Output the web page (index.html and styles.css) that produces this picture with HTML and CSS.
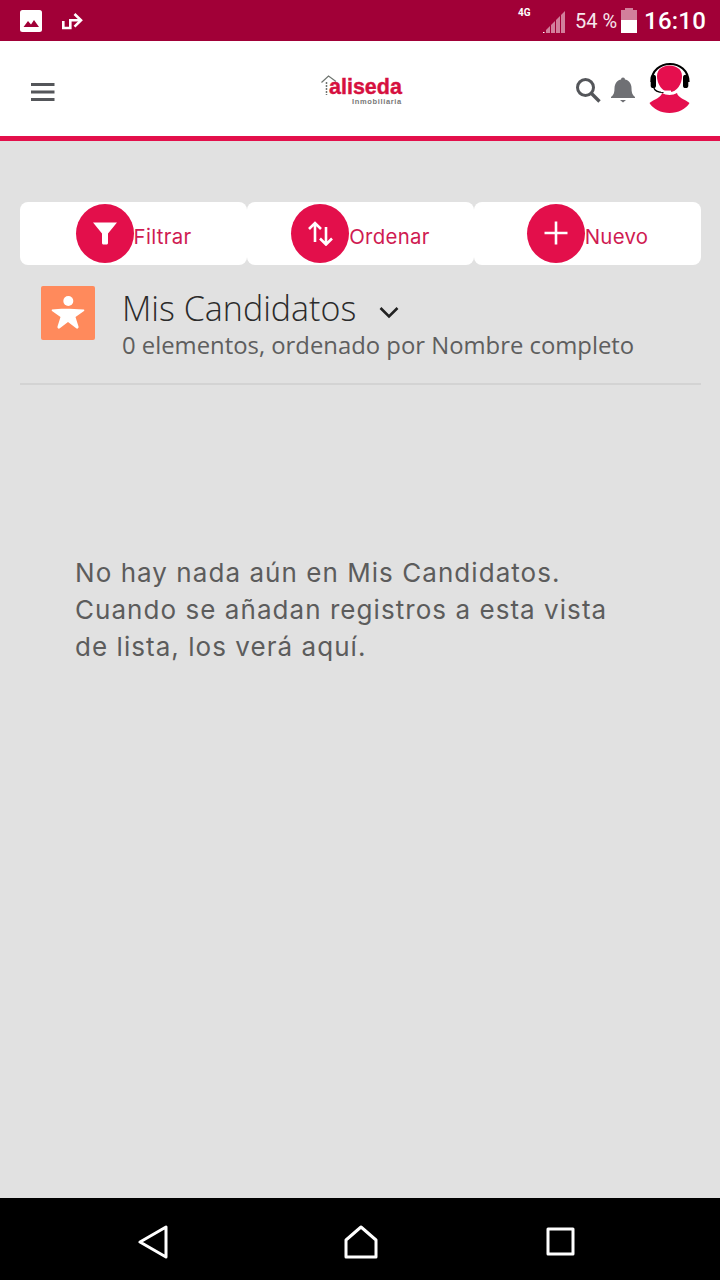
FILE: index.html
```html
<!DOCTYPE html>
<html lang="es">
<head>
<meta charset="utf-8">
<title>Mis Candidatos</title>
<link rel="stylesheet" href="styles.css">
</head>
<body>
<div class="phone">
  <div class="status">
    <div class="status-left">
      <svg class="ic-photo" viewBox="0 0 22 22"><rect width="22" height="22" rx="2.500" fill="#fff"/><path d="M3.500 17 8 11l3 3.500 3-4.500 5 7z" fill="#a10037"/></svg>
      <svg class="ic-share" viewBox="0 0 22 18"><path d="M2.300 9v7h7V8.300h10" fill="none" stroke="#fff" stroke-width="2.600"/><path d="M13.500 2l6.500 6.300-6.500 6.300" fill="none" stroke="#fff" stroke-width="2.600"/></svg>
    </div>
    <div class="status-right">
      <span class="net">4G</span>
      <svg class="ic-signal" viewBox="0 0 22 22"><path d="M0 21h1.500v1H0z" fill="#fff"/><path d="M3 22v-3l4-4v7zM8 22v-8l4-4v12zM13 22V9l4-4v17zM18 22V4l4-4v22z" fill="#d27f9b"/></svg>
      <span class="pct">54 %</span>
      <div class="battery"><div class="battery-cap"></div><div class="battery-empty"></div><div class="battery-full"></div></div>
      <span class="clock">16:10</span>
    </div>
  </div>

  <header class="topbar">
    <svg class="ic-menu" viewBox="0 0 24 18"><path d="M0 1.500h23.500M0 9h23.500M0 16.500h23.500" stroke="#54565a" stroke-width="3"/></svg>
    <div class="logo">
      <svg class="logo-house" viewBox="0 0 16 20"><path d="M.500 7.500 7.500 1 15 6.500" fill="none" stroke="#6f7570" stroke-width="1.200"/><path d="M5.500 7v13" stroke="#6f7570" stroke-width="1.500" stroke-dasharray="2 1"/></svg>
      <div class="logo-words">
        <span class="logo-name">aliseda</span>
        <span class="logo-sub">Inmobiliaria</span>
      </div>
    </div>
    <div class="top-actions">
      <svg class="ic-search" viewBox="0 0 26 26"><circle cx="10.500" cy="10.500" r="8" fill="none" stroke="#54565a" stroke-width="3"/><path d="m16.500 16.500 8 8" stroke="#54565a" stroke-width="3.400"/></svg>
      <svg class="ic-bell" viewBox="0 0 26 26"><path d="M1 20c3-2 3.500-5 3.500-9C4.500 6 8 3 11 2.500a2 2 0 0 1 4 0C18 3 21.500 6 21.500 11c0 4 .5 7 3.500 9v1H1z" fill="#6f7074"/><path d="M10 23h6l-3 2.500z" fill="#6f7074"/></svg>
      <svg class="ic-agent" viewBox="0 0 44 54"><path d="M3.500 20C3.500-4 40.500-4 40.500 20" fill="none" stroke="#000" stroke-width="2.200"/><rect x="2.700" y="12.700" width="5.300" height="13.300" rx="2.600" fill="#000"/><rect x="35" y="12.700" width="5.300" height="13.300" rx="2.600" fill="#000"/><path d="M9 14C9 0 34 0 34 14c0 8-5 16-12.500 16S9 22 9 14z" fill="#e50f4e"/><path d="M5.500 25c1 4 5 5.500 10 5.500" fill="none" stroke="#000" stroke-width="1.200"/><path d="M13 29.300h10" stroke="#fff" stroke-width="1.500"/><path d="M14 31c-1 5-8 6-12.500 10C5 47 13 51 21.500 51S38 47 41.500 41C37 37 30 36 29 31c-4 2.500-11 2.500-15 0z" fill="#e50f4e"/></svg>
    </div>
  </header>

  <main class="content">
    <div class="actions">
      <button class="action">
        <span class="disc"><svg class="disc-ic" viewBox="0 0 26 26"><path d="M1 2.500h24l-9 11v9.500c0 1-1 1.500-1.500 1.500h-3C11 24.500 10 24 10 23v-9.500z" fill="#fff"/></svg></span>
        <span class="action-label">Filtrar</span>
      </button>
      <button class="action">
        <span class="disc"><svg class="disc-ic" viewBox="0 0 26 26"><path d="M8 22V3M2 9l6-6 6 6M19 7v17.500M13 18.500l6 6 6-6" fill="none" stroke="#fff" stroke-width="2.600"/></svg></span>
        <span class="action-label">Ordenar</span>
      </button>
      <button class="action">
        <span class="disc"><svg class="disc-ic" viewBox="0 0 26 26"><path d="M13 1.500v23M1.500 13h23" stroke="#fff" stroke-width="2.600"/></svg></span>
        <span class="action-label">Nuevo</span>
      </button>
    </div>

    <section class="list-head">
      <div class="list-icon"><svg viewBox="0 0 34 34"><circle cx="17.300" cy="5" r="5" fill="#fff"/><path d="M1 13.500c7-1 18-1 32 0 .5 .5 .5 1 0 1.500l-8.500 6 3 9.500c.5 1.500-1 2.500-2 2L17 26l-8.500 6.500c-1 .5-2.500-.5-2-2l3-9.500L1 15c-.5-.5-.5-1 0-1.500z" fill="#fff"/></svg></div>
      <div class="list-text">
        <div class="list-title"><h1>Mis Candidatos</h1><svg class="ic-chevron" viewBox="0 0 20 13"><path d="M1.500 2 10 10.500 18.500 2" fill="none" stroke="#222" stroke-width="2.600"/></svg></div>
        <p class="list-sub">0 elementos, ordenado por Nombre completo</p>
      </div>
    </section>

    <p class="empty">No hay nada aún en Mis Candidatos. Cuando se añadan registros a esta vista de lista, los verá aquí.</p>
  </main>

  <nav class="navbar">
    <svg class="nav-back" viewBox="0 0 30 34"><path d="M2 17 28 2v30z" fill="none" stroke="#fff" stroke-width="3" stroke-linejoin="round"/></svg>
    <svg class="nav-home" viewBox="0 0 34 34"><path d="M2 32V15L17 2l15 13v17z" fill="none" stroke="#fff" stroke-width="3" stroke-linejoin="round"/></svg>
    <svg class="nav-recent" viewBox="0 0 30 30"><rect x="2" y="2" width="25" height="25" fill="none" stroke="#fff" stroke-width="3" stroke-linejoin="round"/></svg>
  </nav>
</div>
</body>
</html>
```
FILE: styles.css
```css
* { box-sizing: border-box; }

html, body { margin: 0; padding: 0; }

.phone {
  width: 720px;
  height: 1280px;
  display: flex;
  flex-direction: column;
  background: #e1e1e1;
  overflow: hidden;
  font-family: "Open Sans", sans-serif;
}

/* Android status bar */
.status {
  height: 41px;
  flex: none;
  background: #a10037;
  display: flex;
  justify-content: space-between;
  align-items: center;
  padding: 0 14px 0 20px;
  color: #fff;
  font-family: Roboto, sans-serif;
}
.status-left { display: flex; align-items: center; gap: 19px; }
.ic-photo { width: 22px; height: 22px; display: block; }
.ic-share { width: 22px; height: 18px; display: block; }
.status-right { display: flex; align-items: center; }
.net { font-size: 10px; font-weight: 700; width: 25px; margin-bottom: 17px; }
.ic-signal { width: 22px; height: 22px; display: block; margin-top: 3px; }
.pct { font-size: 20px; margin-left: 10px; width: 46px; color: #f6e6ec; }
.battery { width: 16px; height: 25px; display: flex; flex-direction: column; align-items: center; margin-right: 7px; margin-bottom: 1px; }
.battery-cap { width: 8px; height: 2px; background: #d27f9b; }
.battery-empty { width: 16px; height: 10px; background: #d27f9b; }
.battery-full { width: 16px; height: 13px; background: #fff; }
.clock { font-size: 24px; font-weight: 500; letter-spacing: .2px; }

/* Header */
.topbar {
  height: 100px;
  flex: none;
  background: #fff;
  border-bottom: 5px solid #e30f4b;
  display: flex;
  align-items: center;
  padding: 0 28px 0 31px;
}
.ic-menu { width: 24px; height: 18px; display: block; margin-top: 6px; }
.logo {
  display: flex;
  align-items: flex-start;
  margin-left: 266px;
  margin-top: 3px;
}
.logo-house { width: 16px; height: 20px; margin-right: -8px; display: block; }
.logo-words { display: flex; flex-direction: column; align-items: flex-end; padding-top: 2px; }
.logo-name {
  font-family: "Liberation Sans", sans-serif;
  font-weight: 700;
  font-size: 21.5px;
  line-height: 20px;
  color: #d6103f;
  -webkit-text-stroke: .4px #d6103f;
}
.logo-sub {
  font-family: "Liberation Sans", sans-serif;
  font-weight: 700;
  font-size: 7.5px;
  line-height: 7px;
  letter-spacing: .65px;
  color: #777;
  margin-top: 1px;
}
.top-actions { margin-left: auto; display: flex; align-items: center; }
.ic-search { width: 26px; height: 26px; display: block; margin-right: 9px; margin-top: 3px; }
.ic-bell { width: 26px; height: 26px; display: block; margin-right: 12px; margin-top: 3px; }
.ic-agent { width: 44px; height: 54px; display: block; }

/* Page body */
.content {
  flex: 1;
  padding: 61px 19px 0 20px;
}
.actions { display: flex; }
.action {
  flex: 1;
  height: 63px;
  border: 0;
  border-radius: 8px;
  background: #fff;
  padding: 0;
  display: flex;
  align-items: center;
  justify-content: center;
  font: inherit;
}
.disc {
  width: 58px;
  height: 59px;
  border-radius: 50%;
  background: #e30f4b;
  display: flex;
  align-items: center;
  justify-content: center;
  margin-top: -1px;
}
.disc-ic { width: 26px; height: 26px; display: block; }
.action-label {
  font-family: Inter, sans-serif;
  font-size: 20.4px;
  line-height: 24px;
  letter-spacing: .3px;
  color: #cf1b52;
  margin-top: 6px;
}

.list-head {
  display: flex;
  margin-top: 21px;
  padding: 0 0 23px 21px;
  border-bottom: 2px solid #d3d3d3;
}
.list-icon {
  width: 54px;
  height: 54px;
  flex: none;
  background: #ff8a5c;
  border-radius: 2px;
  display: flex;
  align-items: center;
  justify-content: center;
}
.list-icon svg { width: 34px; height: 34px; display: block; }
.list-text { margin-left: 27px; }
.list-title { display: flex; align-items: center; height: 44px; }
.list-title h1 {
  margin: 0;
  font-size: 34px;
  font-weight: 300;
  line-height: 44px;
  color: #2b2b2b;
}
.ic-chevron { width: 20px; height: 13px; margin-left: 23px; margin-top: 8px; display: block; }
.list-sub {
  margin: 0;
  font-size: 23.85px;
  line-height: 30px;
  color: #5e5e5e;
}

.empty {
  margin: 169px 0 0 55px;
  width: 560px;
  font-family: Inter, sans-serif;
  font-size: 26px;
  line-height: 37px;
  letter-spacing: 1.05px;
  color: #5c5c5c;
}

/* Android navigation bar */
.navbar {
  height: 82px;
  flex: none;
  background: #000;
  display: flex;
  align-items: center;
  justify-content: space-between;
  padding: 6px 144px 0 138px;
}
.nav-back { width: 30px; height: 34px; display: block; }
.nav-home { width: 34px; height: 34px; display: block; margin-left: 7px; }
.nav-recent { width: 30px; height: 30px; display: block; }
```
